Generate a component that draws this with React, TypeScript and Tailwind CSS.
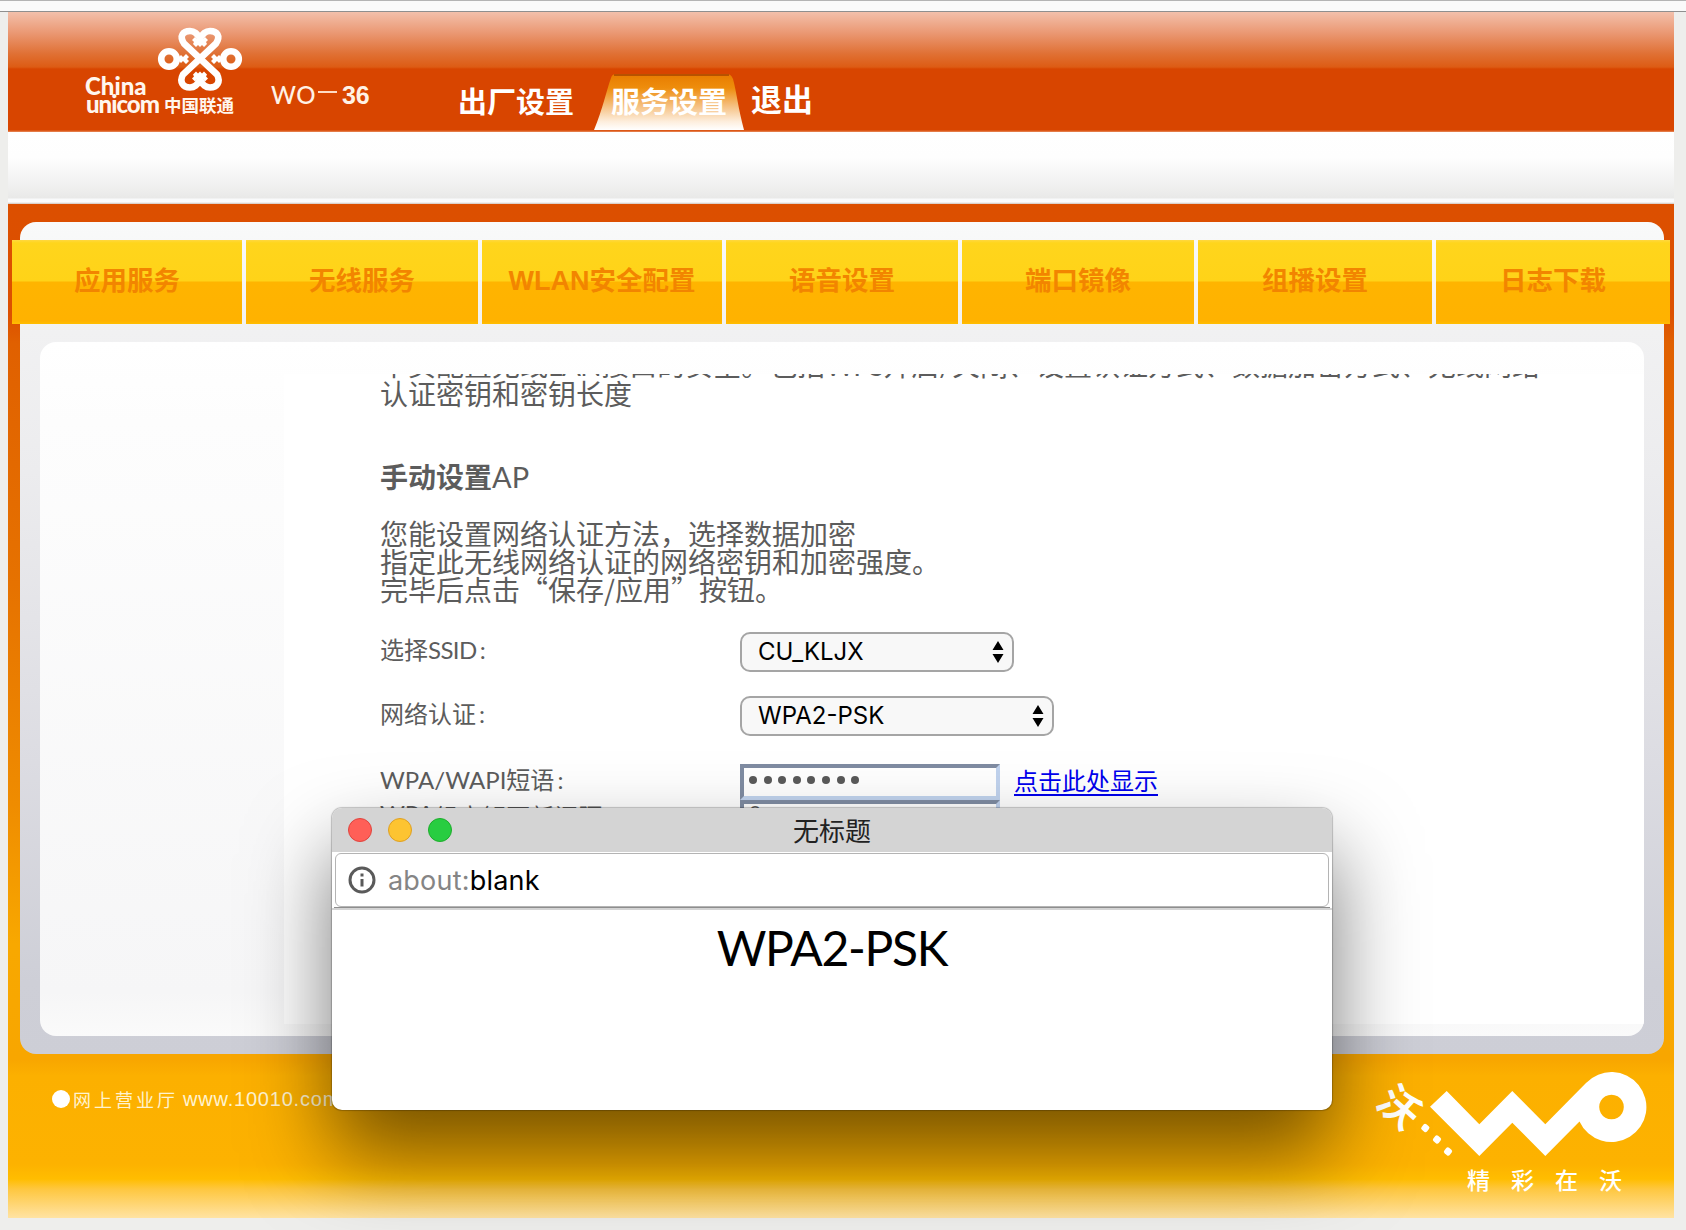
import React from "react";

const cjk = "font-['Noto_Sans_CJK_SC',sans-serif]";

const tabs: { label: string; width: string }[] = [
  { label: "应用服务", width: "w-[230px]" },
  { label: "无线服务", width: "w-[232px]" },
  { label: "WLAN安全配置", width: "w-[240px]" },
  { label: "语音设置", width: "w-[232px]" },
  { label: "端口镜像", width: "w-[232px]" },
  { label: "组播设置", width: "w-[234px]" },
  { label: "日志下载", width: "w-[234px]" },
];

function Knot() {
  return (
    <svg
      className="absolute left-[148px] top-[15px]"
      width="88"
      height="66"
      viewBox="156 27 88 66"
      fill="none"
      stroke="#fff"
      strokeWidth="6.600"
      strokeLinecap="round"
    >
      <path d="M217 74.500 L184 43.500 C179 36 183 31 190 31 C195 31 197 34 200 38 C203 34 205 31 210 31 C217 31 221 36 216 43.500 L183 74.500 C179 82 183 87.500 190 87.500 C195 87.500 197 84.500 200 80.500 C203 84.500 205 87.500 210 87.500 C217 87.500 221 82 217 74.500" />
      <circle cx="169" cy="59" r="7.800" />
      <circle cx="231" cy="59" r="7.800" />
      <g fill="#fff" stroke="none">
        <path d="M177 59 l4 -4 2 2 3 -3 3 3 -2 2 2 2 -3 3 -3 -3 -2 2 Z M223 59 l-4 -4 -2 2 -3 -3 -3 3 2 2 -2 2 3 3 3 -3 2 2 Z" />
        <path d="M200 36 l3 3 2 -2 3 3 -2 2 1 2 -3 3 -2 -2 -2 2 -2 -2 -2 2 -3 -3 1 -2 -2 -2 3 -3 2 2 Z" />
        <path d="M200 82.500 l3 -3 2 2 3 -3 -2 -2 1 -2 -3 -3 -2 2 -2 -2 -2 2 -2 -2 -3 3 1 2 -2 2 3 3 2 -2 Z" />
      </g>
    </svg>
  );
}

function Header() {
  return (
    <header className="relative flex h-[120px] bg-[linear-gradient(180deg,#f3c0ab_0px,#ea9670_22px,#e07034_42px,#dd5c14_55px,#d84500_57px,#d84500_118px,#e88d5e_120px)]">
      <Knot />
      <div className="ml-[77px] mt-[65px] w-[161px] font-['Lato',sans-serif] text-[24px] font-black leading-[18px] text-[#fff6ee]">
        <div className="tracking-[0px]">China</div>
        <div className="flex items-center whitespace-nowrap">
          <span className="ml-[1px] w-[78px] tracking-[-1px]">unicom</span>
          <span className="font-['Noto_Sans_CJK_SC',sans-serif] text-[17.500px] font-bold leading-[17px]">中国联通</span>
        </div>
      </div>
      <div className="ml-[25px] mt-[71px] flex h-[24px] w-[101px] items-center font-['Lato',sans-serif] text-[24px] font-medium leading-[24px] text-[#fff2e6]">
        <span className="tracking-[0.5px]">WO</span>
        <span className="mb-[6px] ml-[2px] mr-[5px] h-[2px] w-[19px] bg-[#ffdcc4]" />
        <span className="font-['Liberation_Sans',sans-serif] text-[25px] font-bold">36</span>
      </div>
      <nav className={`flex text-white ${cjk}`}>
        <a className="ml-[86px] mt-[73px] w-[136px] text-[29px] font-bold leading-[30px] whitespace-nowrap">出厂设置</a>
        <a className="relative mt-[62px] block h-[56px] w-[150px]">
          <svg className="absolute inset-0" width="150" height="56" viewBox="0 0 150 56">
            <defs>
              <linearGradient id="activeTab" x1="0" y1="0" x2="0" y2="1">
                <stop offset="0" stopColor="#e87c00" />
                <stop offset="0.250" stopColor="#ee8d0c" />
                <stop offset="0.550" stopColor="#f5bd7a" />
                <stop offset="0.850" stopColor="#fdeedd" />
                <stop offset="1" stopColor="#ffffff" />
              </linearGradient>
            </defs>
            <path d="M0 56 C9 34 12 18 17 4 Q18 0 22 0 H133 Q137 0 139 5 C143 20 144 34 150 56 Z" fill="url(#activeTab)" />
            <path d="M20 1 H135" stroke="#b85200" strokeWidth="2" />
          </svg>
          <span className="relative ml-[17px] mt-[11px] block text-[29px] font-bold leading-[30px] whitespace-nowrap">服务设置</span>
        </a>
        <a className="ml-[7px] mt-[71px] text-[31px] font-bold leading-[30px] whitespace-nowrap">退出</a>
      </nav>
    </header>
  );
}

function NavTabs() {
  return (
    <nav className={`-mx-[8px] flex h-[84px] gap-[4px] ${cjk}`}>
      {tabs.map((t) => (
        <a
          key={t.label}
          className={`${t.width} flex shrink-0 items-center justify-center bg-[linear-gradient(180deg,#ffd83f_0px,#ffd51c_3px,#ffd318_41px,#ffb400_42px,#ffb200_81px,#ffbe00_84px)] pb-[7px] text-[26.500px] font-bold text-[#f28500]`}
        >
          {t.label === "WLAN安全配置" ? (
            <>
              <span className="pt-[5px] font-['Liberation_Sans',sans-serif] text-[27px]">WLAN</span>安全配置
            </>
          ) : (
            t.label
          )}
        </a>
      ))}
    </nav>
  );
}

function Select({ value, width }: { value: string; width: string }) {
  return (
    <div className={`${width} flex h-[40px] items-center justify-between rounded-[10px] border-2 border-[#a5a5a5] bg-[#f8f8f8] pl-[16px] pr-[8px] font-['Inter',sans-serif] text-[24px] text-black`}>
      <span>{value}</span>
      <svg width="12" height="22" viewBox="0 0 12 22">
        <path d="M6 0 L11.500 9 H0.500 Z M6 22 L0.500 13 H11.500 Z" fill="#000" />
      </svg>
    </div>
  );
}

function Field({ label, children }: { label: React.ReactNode; children: React.ReactNode }) {
  return (
    <div className="flex h-[64px] items-center">
      <div className="w-[360px] shrink-0 pb-[4px] text-[24px] whitespace-nowrap">{label}</div>
      {children}
    </div>
  );
}

function Colon() {
  return <span className="ml-[3px]">:</span>;
}

const inputBox =
  "flex h-[36px] w-[260px] border-4 border-b-[#c1d3ee] border-l-[#7f8ca2] border-r-[#c1d3ee] border-t-[#7f8ca2] bg-white pl-[5px]";

function Settings() {
  return (
    <main className="ml-[244px] mt-[32px] h-[650px] overflow-hidden bg-white pl-[96px] font-['Lato','Noto_Sans_CJK_SC',sans-serif] text-[#5c5c5c]">
      <div className="-mt-[23px] text-[28px] leading-[28px]">
        <p className="mb-[1px] whitespace-nowrap">
          本页配置无线<span className="tracking-[-0.5px]">LAN</span>接口的安全。包括<span className="tracking-[-1px]">WPS</span>开启/关闭、设置认证方式、数据加密方式、无线网络
        </p>
        <p>认证密钥和密钥长度</p>
        <h2 className="mt-[55px]">
          <b className="font-bold">手动设置</b>
          <span className="text-[29px]">AP</span>
        </h2>
        <div className="mt-[29px]">
          <p>您能设置网络认证方法，选择数据加密</p>
          <p>指定此无线网络认证的网络密钥和加密强度。</p>
          <p className="-mt-px font-['Noto_Sans_CJK_SC',sans-serif]">完毕后点击“保存/应用”按钮。</p>
        </div>
      </div>
      <div className="mt-[17px]">
        <Field label={<>选择<span className="tracking-[-0.6px]">SSID</span><Colon /></>}>
          <Select value="CU_KLJX" width="w-[274px]" />
        </Field>
        <Field label={<>网络认证<Colon /></>}>
          <Select value="WPA2-PSK" width="w-[314px]" />
        </Field>
        <div className="flex h-[52px] items-end">
          <div className="w-[360px] shrink-0 self-end text-[24px] leading-[41px] whitespace-nowrap">
            WPA/WAPI短语<Colon />
          </div>
          <div className={`${inputBox} items-center gap-[6.600px] pb-[4px]`}>
            {Array.from({ length: 8 }, (_, i) => (
              <span key={i} className="h-[8px] w-[8px] rounded-full bg-[#5a5a5a]" />
            ))}
          </div>
          <a className="ml-[14px] text-[24px] leading-[38px] text-[#0000ee] underline decoration-2 underline-offset-[4px]">点击此处显示</a>
        </div>
        <div className="flex h-[36px]">
          <div className="w-[360px] shrink-0 pt-[3px] text-[24px] leading-[28px] whitespace-nowrap">
            <span className="relative -top-[3px]">WPA</span>组密钥更新间隔:
          </div>
          <div className={inputBox}>
            <span className="-mt-px font-['Liberation_Sans',sans-serif] text-[22px] leading-[22px]">0</span>
          </div>
        </div>
      </div>
    </main>
  );
}

function WoLogo() {
  return (
    <svg className="absolute right-[22px] top-[12px]" width="280" height="135" viewBox="1372 1066 280 135">
      <path
        fill="#fff"
        fillRule="evenodd"
        d="M1430 1106.700 L1446.700 1091 L1479.300 1124.300 L1512.300 1091 L1545.300 1124.300 L1586 1083 A35 35 0 1 1 1579.500 1121.500 L1545.300 1156 L1512.300 1122.700 L1479.300 1156 Z M1611.500 1094.700 a12.300 12.300 0 1 0 0.010 0 Z"
      />
      <g fill="#fff">
        <rect x="-3.500" y="-3.500" width="7" height="7" rx="2" transform="translate(1425.300 1128) rotate(40)" />
        <rect x="-3.500" y="-3.500" width="7" height="7" rx="2" transform="translate(1437 1139.500) rotate(40)" />
        <rect x="-3.500" y="-3.500" width="7" height="7" rx="2" transform="translate(1448 1151.500) rotate(40)" />
        <text
          transform="translate(1399.500 1107) rotate(42)"
          x="0"
          y="15"
          textAnchor="middle"
          fontSize="41"
          fontWeight="700"
          fontFamily="'Noto Sans CJK SC', sans-serif"
        >
          沃
        </text>
        <text x="1467" y="1189" fontSize="23" fontWeight="500" letterSpacing="21" fontFamily="'Noto Sans CJK SC', sans-serif">
          精彩在沃
        </text>
      </g>
    </svg>
  );
}

function Popup() {
  return (
    <section className="absolute left-[332px] top-[808px] h-[302px] w-[1000px] rounded-[10px] bg-white shadow-[0_0_1px_1px_rgba(0,0,0,0.22),0_44px_84px_0px_rgba(0,0,0,0.54)]">
      <div className="relative flex h-[44px] items-center gap-[16px] rounded-t-[10px] bg-[#d4d4d4] pl-[16px]">
        <span className="h-[24px] w-[24px] rounded-full border border-[#e0443e] bg-[#ff5f57]" />
        <span className="h-[24px] w-[24px] rounded-full border border-[#dfa023] bg-[#fdc431]" />
        <span className="h-[24px] w-[24px] rounded-full border border-[#1dad2b] bg-[#28cd41]" />
        <span className={`absolute inset-x-0 top-[3px] text-center text-[26px] leading-[38px] text-[#222] ${cjk}`}>无标题</span>
      </div>
      <div className="border-b-2 border-[#d4d4d4] px-[2px]">
        <div className="border-b border-[#8e8e8e] pl-px pr-px pt-px">
          <div className="flex h-[54px] items-center rounded-[6px] border border-[#b4b4b4] bg-white pl-[12px] font-['Inter',sans-serif] text-[27px] text-black">
            <svg width="28" height="28" viewBox="0 0 28 28" fill="none" stroke="#5a5a5a" strokeWidth="3">
              <circle cx="14" cy="14" r="12" />
              <path d="M14 13 V20.500 M14 7.500 V10.500" />
            </svg>
            <span className="ml-[12px] pt-[2px] tracking-[0.2px]">
              <span className="text-[#858585]">about:</span>blank
            </span>
          </div>
        </div>
      </div>
      <p className="mt-[10px] text-center font-['Lato',sans-serif] text-[48px] leading-[56px] tracking-[-1.300px] text-black">WPA2-PSK</p>
    </section>
  );
}

export default function App() {
  return (
    <div className="relative h-[1230px] w-[1686px] overflow-hidden bg-[#eeeeec]">
      <div className="h-[12px] border-b border-t border-b-[#8f8f8f] border-t-[#b4b4b4] bg-[#fafafa]" />
      <div className="ml-[8px] h-[1206px] w-[1666px]">
        <Header />
        <div className="h-[72px] bg-[linear-gradient(180deg,#ffffff_0px,#fefefe_25px,#f3f3f3_48px,#e9e9e8_66px,#f9fafb_67px,#fbfcfd_70px,#d0c4bc_72px)]" />
        <div className="relative h-[1014px] bg-[linear-gradient(180deg,#dc4f00_0px,#dc5000_110px,#e06000_140px,#e67200_380px,#ef8c00_600px,#f8a800_740px,#f8a600_855px,#fcb000_872px,#fdb200_960px,#ffbd00_975px,#fec73f_985px,#ffe3a3_1014px)] px-[12px] pt-[18px]">
          <div className="h-[832px] w-[1644px] rounded-[16px] bg-[linear-gradient(180deg,#f9fafa_0px,#f1f1f2_110px,#ececee_250px,#dcdce2_540px,#cecfd7_760px,#cdced6_832px)] pt-[18px]">
            <NavTabs />
            <div className="ml-[20px] mt-[18px] flow-root h-[694px] w-[1604px] overflow-hidden rounded-[16px] bg-[linear-gradient(180deg,#ffffff_0px,#fdfdfd_80px,#f6f6f7_650px,#fafafa_694px)]">
              <Settings />
            </div>
          </div>
          <footer className="relative -mx-[12px] h-[164px]">
            <div className={`flex items-center pl-[44px] pt-[31px] text-[18px] leading-[28px] text-[#fff3cf] ${cjk}`}>
              <span className="mr-[3px] h-[18px] w-[18px] rounded-full bg-white" />
              <span className="tracking-[3px]">网上营业厅</span>
              <span className="ml-[5px] font-['Liberation_Sans',sans-serif] text-[20px] tracking-[0.800px]">www.10010.com</span>
            </div>
            <WoLogo />
          </footer>
        </div>
      </div>
      <Popup />
    </div>
  );
}
